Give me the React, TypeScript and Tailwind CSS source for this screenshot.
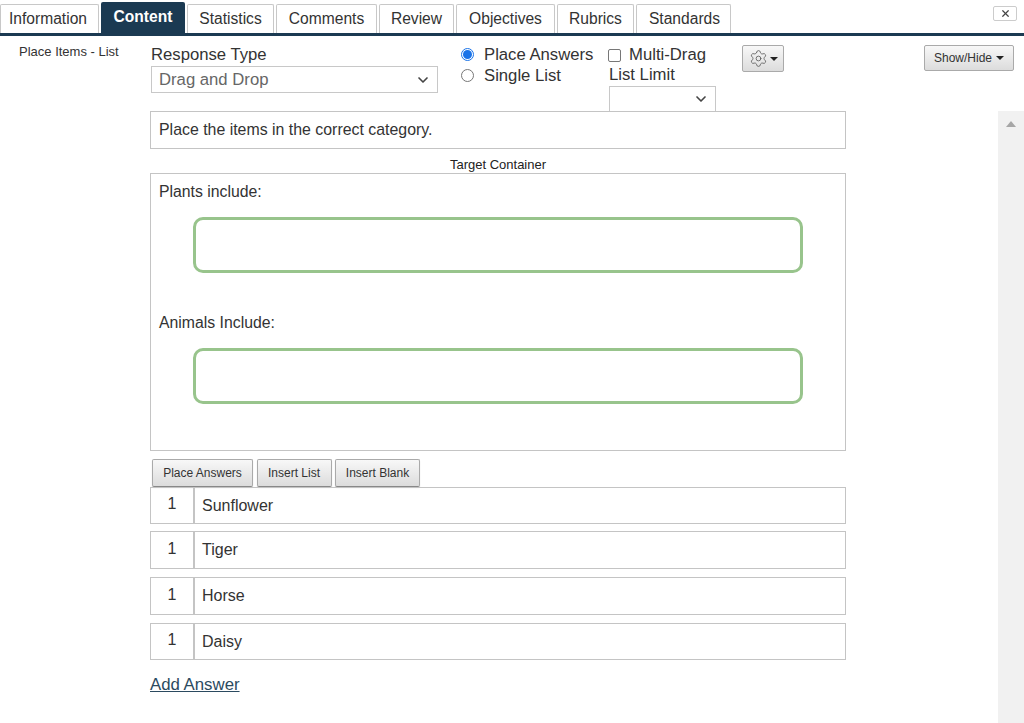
import { ChevronDown, Settings, X } from "lucide-react";

const tabs = [
  { label: "Information", w: "w-[99px] pr-[3px]" },
  { label: "Content", w: "w-[84px]", active: true },
  { label: "Statistics", w: "w-[87px]" },
  { label: "Comments", w: "w-[101px]" },
  { label: "Review", w: "w-[75px]" },
  { label: "Objectives", w: "w-[99px]" },
  { label: "Rubrics", w: "w-[77px]" },
  { label: "Standards", w: "w-[95px] pl-[2px]" },
];

const answers = ["Sunflower", "Tiger", "Horse", "Daisy"];
const answerHeights = ["h-[37px] mb-[7px]", "h-[38px] mb-[8px]", "h-[38px] mb-[8px]", "h-[37px]"];

function Caret() {
  return <span className="inline-block w-0 h-0 border-x-[4px] border-x-transparent border-t-[4px] border-t-[#222]" />;
}

function ToolButton({ label, w }: { label: string; w: string }) {
  return (
    <button className={`${w} h-[28px] text-[12px] text-[#333] rounded-[2px] border border-[#aaa] border-b-[#888] bg-gradient-to-b from-[#f8f8f8] to-[#dcdcdc] shadow-[0_1px_1px_rgba(0,0,0,0.2)]`}>
      {label}
    </button>
  );
}

function DropZone() {
  return <div className="h-[56px] ml-[34px] w-[610px] rounded-[10px] border-[3px] border-[#98c48c] bg-white" />;
}

export default function App() {
  return (
    <div className="h-[723px] w-[1024px] overflow-hidden bg-white flex flex-col font-['Liberation_Sans',Arial,sans-serif] text-[#333]">
      <div className="h-[36px] shrink-0 border-b-[3px] border-[#1b3a52] flex justify-between">
        <div className="flex items-end gap-[2px] pt-[4px]">
          {tabs.map((t) => (
            <div
              key={t.label}
              className={`${t.w} h-[29px] flex items-center justify-center text-[15.6px] rounded-t-[2px] ${
                t.active
                  ? "bg-[#1b3a52] text-white font-bold h-[31px] pb-[2px]"
                  : "border border-b-0 border-[#c8c8c8] text-[#333] bg-white"
              }`}
            >
              {t.label}
            </div>
          ))}
        </div>
        <div className="mt-[6px] mr-[7px] w-[24px] h-[15px] border border-[#ccc] rounded-[2px] flex items-center justify-center">
          <X size={11} strokeWidth={2.6} className="text-[#444]" />
        </div>
      </div>

      <div className="flex flex-1 min-h-0">
        <div className="w-[150px] shrink-0 pl-[19px] pt-[8px] text-[13px] leading-[16px] text-[#333]">Place Items - List</div>

        <div className="w-[696px] shrink-0 flex flex-col">
          <div className="h-[75px] shrink-0 flex">
            <div className="w-[311px] pl-[1px] pt-[8px]">
              <div className="text-[16.7px] leading-[21px] text-[#333]">Response Type</div>
              <div className="mt-[1px] w-[287px] h-[27px] border border-[#c8c8c8] pl-[7px] pr-[6px] flex items-center justify-between text-[16.7px] text-[#666]">
                <span>Drag and Drop</span>
                <ChevronDown size={16} strokeWidth={2.5} className="text-[#444]" />
              </div>
            </div>
            <div className="w-[147px] pt-[8px] text-[16.7px] leading-[21px]">
              <div className="flex items-center gap-[10px]">
                <span className="w-[13px] h-[13px] rounded-full border border-[#1a73e8] flex items-center justify-center">
                  <span className="w-[9px] h-[9px] rounded-full bg-[#1a73e8]" />
                </span>
                <span>Place Answers</span>
              </div>
              <div className="flex items-center gap-[10px]">
                <span className="w-[13px] h-[13px] rounded-full border border-[#777]" />
                <span>Single List</span>
              </div>
            </div>
            <div className="w-[134px] pt-[9px] text-[16.7px] leading-[20px]">
              <div className="flex items-center gap-[8px]">
                <span className="w-[13px] h-[13px] rounded-[2px] border border-[#777]" />
                <span>Multi-Drag</span>
              </div>
              <div className="pl-[1px]">List Limit</div>
              <div className="mt-[1px] ml-[1px] w-[107px] h-[25px] border border-b-0 border-[#c8c8c8] flex items-center justify-end pr-[6px]">
                <ChevronDown size={16} strokeWidth={2.5} className="text-[#444]" />
              </div>
            </div>
            <div className="pt-[9px]">
              <div className="w-[42px] h-[27px] rounded-[2px] border border-[#aaa] bg-gradient-to-b from-[#f8f8f8] to-[#dcdcdc] flex items-center justify-center gap-[2px]">
                <Settings size={19} strokeWidth={1} className="text-[#555]" />
                <Caret />
              </div>
            </div>
          </div>

          <div className="h-[38px] shrink-0 border border-[#c4c4c4] flex items-center pl-[8px] text-[15.9px]">
            Place the items in the correct category.
          </div>
          <div className="h-[24px] shrink-0 pt-[8px] text-center text-[13px] leading-[16px] text-[#222]">Target Container</div>
          <div className="h-[278px] shrink-0 border border-[#c4c4c4] pl-[8px] text-[15.8px]">
            <div className="pt-[8px] leading-[20px]">Plants include:</div>
            <div className="mt-[15px]"><DropZone /></div>
            <div className="mt-[40px] leading-[20px]">Animals Include:</div>
            <div className="mt-[15px]"><DropZone /></div>
          </div>
          <div className="mt-[8px] ml-[2px] flex gap-[3.5px] shrink-0">
            <ToolButton label="Place Answers" w="w-[101px]" />
            <ToolButton label="Insert List" w="w-[75px]" />
            <ToolButton label="Insert Blank" w="w-[85px]" />
          </div>
          <div className="shrink-0">
            {answers.map((a, i) => (
              <div key={a} className={`flex ${answerHeights[i]}`}>
                <div className="w-[43px] shrink-0 border border-r-0 border-[#c4c4c4] flex items-center justify-center text-[16px] pb-[3px]">1</div>
                <div className="flex-1 border border-[#c4c4c4] border-l-2 flex items-center pl-[7px] text-[16px]">{a}</div>
              </div>
            ))}
          </div>
          <a className="mt-[15px] shrink-0 text-[16.8px] leading-[20px] underline text-[#2b4a60]">Add Answer</a>
        </div>

        <div className="flex-1 flex flex-col items-end">
          <button className="mt-[9px] mr-[10px] w-[90px] h-[26px] rounded-[2px] border border-[#aaa] bg-gradient-to-b from-[#f8f8f8] to-[#dcdcdc] text-[12px] text-[#333] flex items-center justify-center gap-[4px]">
            Show/Hide <Caret />
          </button>
          <div className="mt-[40px] w-[26px] flex-1 bg-[#f1f1f1] flex justify-center pt-[10px]">
            <span className="w-0 h-0 border-x-[5px] border-x-transparent border-b-[6px] border-b-[#a6a6a6]" />
          </div>
        </div>
      </div>
    </div>
  );
}
